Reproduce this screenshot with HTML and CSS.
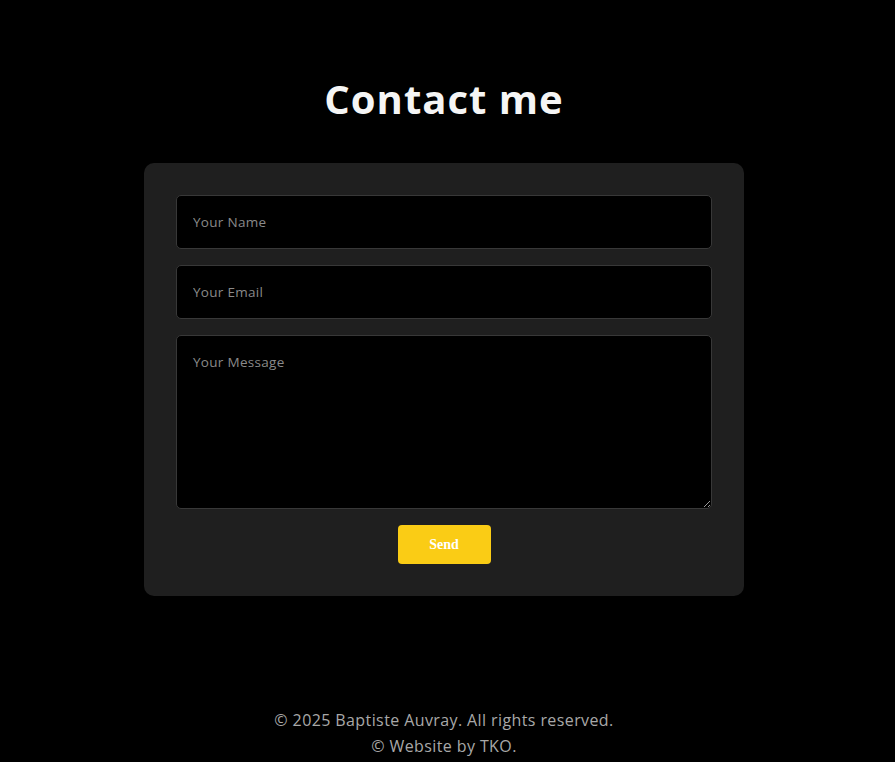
FILE: index.html
```html
<!DOCTYPE html>
<html lang="en">
<head>
<meta charset="utf-8">
<title>Contact me</title>
<link rel="stylesheet" href="styles.css">
</head>
<body>
<main class="page">
  <h1 class="title">Contact me</h1>
  <form class="card">
    <input class="field" type="text" placeholder="Your Name">
    <input class="field" type="email" placeholder="Your Email">
    <textarea class="field area" placeholder="Your Message"></textarea>
    <button class="send" type="button">Send</button>
  </form>
</main>
<footer class="footer">
  <p>© 2025 Baptiste Auvray. All rights reserved.</p>
  <p>© Website by TKO.</p>
</footer>
</body>
</html>
```
FILE: styles.css
```css
html, body {
  margin: 0;
  padding: 0;
  background: #000;
}
body {
  box-sizing: border-box;
  padding-right: 7px;
  font-family: "Open Sans", "Noto Sans", sans-serif;
  color: #f0f0f0;
}
.page {
  display: flex;
  flex-direction: column;
  align-items: center;
  padding-top: 75px;
}
.title {
  margin: 0 0 40px;
  font-size: 40px;
  line-height: 48px;
  font-weight: 700;
  color: #f5f5f5;
  letter-spacing: 1px;
}
.card {
  box-sizing: border-box;
  width: 600px;
  background: #1f1f1f;
  border-radius: 10px;
  padding: 32px;
  display: flex;
  flex-direction: column;
  align-items: center;
  gap: 16px;
}
.field {
  box-sizing: border-box;
  width: 100%;
  height: 54px;
  margin: 0;
  padding: 0 16px;
  background: #000;
  border: 1px solid #383838;
  border-radius: 5px;
  color: #ddd;
  font-family: "Open Sans", "Noto Sans", sans-serif;
  font-size: 13.5px;
  letter-spacing: 0.3px;
  outline: none;
}
.field::placeholder {
  color: #8a8a8a;
}
.area {
  height: 174px;
  padding: 17px 16px;
  resize: vertical;
}
.send {
  width: 93px;
  height: 39px;
  margin: 0;
  border: none;
  border-radius: 4px;
  background: #facc15;
  color: #fff;
  font-family: "Liberation Serif", serif;
  font-weight: 700;
  font-size: 14px;
  cursor: pointer;
}
.footer {
  margin-top: 111px;
  text-align: center;
  color: #a8a8a8;
  font-size: 16px;
  letter-spacing: 0.4px;
  line-height: 26px;
}
.footer p {
  margin: 0;
}
```
